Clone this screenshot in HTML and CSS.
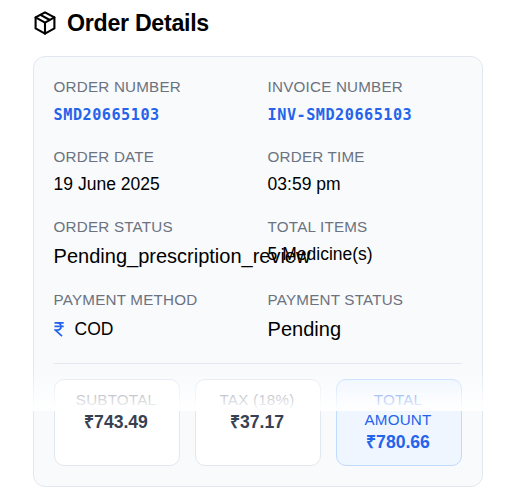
FILE: index.html
```html
<!DOCTYPE html>
<html lang="en">
<head>
<meta charset="utf-8">
<title>Order Details</title>
<link rel="stylesheet" href="styles.css">
</head>
<body>
<main class="page">
  <h2 class="title">
    <svg class="box-icon" viewBox="0 0 22 24" aria-hidden="true"><path d="M11 1.300 20.400 6.400V17.400L11 22.700 1.600 17.400V6.400Z"/><path d="m1.600 6.400 9.400 5.300 9.400-5.300M11 11.700v11M6.500 3.800l9.300 5.200"/></svg>
    <span>Order Details</span>
  </h2>
  <section class="card">
    <dl class="grid">
      <div class="item"><dt>ORDER NUMBER</dt><dd class="code">SMD20665103</dd></div>
      <div class="item"><dt>INVOICE NUMBER</dt><dd class="code">INV-SMD20665103</dd></div>
      <div class="item"><dt>ORDER DATE</dt><dd>19 June 2025</dd></div>
      <div class="item"><dt>ORDER TIME</dt><dd>03:59 pm</dd></div>
      <div class="item"><dt>ORDER STATUS</dt><dd class="status">Pending_prescription_review</dd></div>
      <div class="item"><dt>TOTAL ITEMS</dt><dd>5 Medicine(s)</dd></div>
      <div class="item"><dt>PAYMENT METHOD</dt><dd class="method"><svg class="rupee" viewBox="0 0 10 16" aria-hidden="true"><path d="M.500 1.800H9.700M.500 5.300H9.700M.500 1.800H3C8.400 1.800 8.400 9 3 9H1.200L8 15.200"/></svg>COD</dd></div>
      <div class="item"><dt>PAYMENT STATUS</dt><dd class="status">Pending</dd></div>
    </dl>
    <div class="totals">
      <div class="total"><span class="label">SUBTOTAL</span><strong>₹743.49</strong></div>
      <div class="total"><span class="label">TAX (18%)</span><strong>₹37.17</strong></div>
      <div class="total grand"><span class="label">TOTAL AMOUNT</span><strong>₹780.66</strong></div>
    </div>
  </section>
  <div class="fade"></div>
</main>
</body>
</html>
```
FILE: styles.css
```css
* { box-sizing: border-box; }
body { margin: 0; background: #fff; color: #000; font-family: "Liberation Sans", Arial, sans-serif; }
.page { position: relative; width: 530px; height: 502px; padding: 9px 47px 0 33px; overflow: hidden; }
.title { display: flex; align-items: center; gap: 11.5px; height: 28px; margin: 0 0 19px; padding-left: 0.5px; font-size: 23.2px; letter-spacing: -0.28px; font-weight: 700; }
.box-icon { width: 22px; height: 24px; fill: none; stroke: currentColor; stroke-width: 2.1; stroke-linecap: round; stroke-linejoin: round; }
.card { height: 431px; padding: 20px; border: 1px solid #e2e8f0; border-radius: 12px; background: #f8fafc; }
.grid { display: grid; grid-template-columns: 1fr 1fr; grid-template-rows: 50px 50px 53px 53px; gap: 20px; margin: 0; height: 287px; border-bottom: 1px solid #e2e8f0; }
.item { display: flex; flex-direction: column; gap: 8px; min-width: 0; margin-left: -0.4px; }
dt, .label { font-size: 15.2px; line-height: 20px; letter-spacing: 0.2px; color: #6b7280; white-space: nowrap; }
dd { margin: 0; font-size: 17.5px; line-height: 18px; white-space: nowrap; }
.code { font-family: "DejaVu Sans Mono", monospace; font-size: 15.2px; line-height: 20px; letter-spacing: 0.5px; font-weight: 700; color: #2563eb; }
.status { font-size: 20px; line-height: 23px; }
.method { display: flex; align-items: center; gap: 11px; line-height: 22px; }
.rupee { width: 10px; height: 16px; fill: none; stroke: #2563eb; stroke-width: 1.7; }
.totals { display: grid; grid-template-columns: repeat(3, 1fr); gap: 15px; margin-top: 15px; }
.total { display: flex; flex-direction: column; align-items: center; height: 87px; padding: 10px 16px 10px 14px; border: 1px solid #e2e8f0; border-radius: 10px; background: #fff; text-align: center; }
.total strong { font-size: 17.6px; line-height: 25px; color: #374151; }
.total .label { white-space: normal; }
.grand { border-color: #bfdbfe; background: #eff6ff; }
.grand .label, .grand strong { color: #2563eb; }
.fade { position: absolute; left: 0; right: 0; top: 371px; height: 40px; background: linear-gradient(rgba(255,255,255,0), #fff); }
```
